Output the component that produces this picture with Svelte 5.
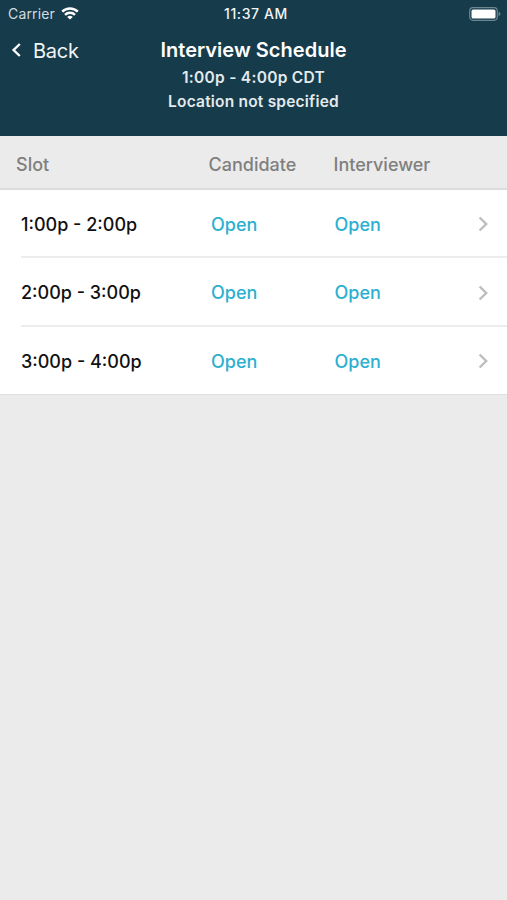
<script>
  const slots = ['1:00p - 2:00p', '2:00p - 3:00p', '3:00p - 4:00p'];
</script>

<div class="screen">
  <header>
    <div class="status">
      <div class="carrier">
        <span>Carrier</span>
        <svg width="18" height="13" viewBox="0 0 18 13" fill="none" stroke="#fff" stroke-width="2.5">
          <path d="M1.2 4.6C5.4 .4 12.6 .4 16.8 4.6" />
          <path d="M4 7.8C6.8 5 11.2 5 14 7.8" />
          <path d="M9 12.6L6.2 9.9Q9 7.7 11.8 9.9Z" fill="#fff" stroke="none" />
        </svg>
      </div>
      <div class="clock">11:37 AM</div>
      <div class="power">
        <svg width="33" height="14" viewBox="0 0 33 14">
          <rect x="1.7" y=".7" width="27.6" height="12.6" rx="3.2" fill="none" stroke="#6d8792" stroke-width="1.2" />
          <rect x="3.5" y="2.5" width="24" height="9" rx="1.6" fill="#fff" />
          <path d="M30.6 4.8Q32.4 5.4 32.4 7T30.6 9.2Z" fill="#6d8792" />
        </svg>
      </div>
    </div>
    <div class="nav">
      <div class="back">
        <svg width="10" height="15" viewBox="0 0 10 15" fill="none" stroke="#fff" stroke-width="2.4">
          <path d="M8.8 1L2.6 7L8.8 13" />
        </svg>
        <span>Back</span>
      </div>
      <div class="titles">
        <h1>Interview Schedule</h1>
        <p class="time">1:00p - 4:00p CDT</p>
        <p class="place">Location not specified</p>
      </div>
      <div></div>
    </div>
  </header>
  <div class="heads">
    <span class="h-slot">Slot</span>
    <span class="h-cand">Candidate</span>
    <span class="h-int">Interviewer</span>
  </div>
  <main>
    {#each slots as slot}
      <div class="row">
        <span class="slot">{slot}</span>
        <span class="open cand">Open</span>
        <span class="open">Open</span>
        <svg width="11" height="16" viewBox="0 0 11 16" fill="none" stroke="#bdbdbf" stroke-width="2.4">
          <path d="M1.6 1.5L8.2 8L1.6 14.5" />
        </svg>
      </div>
    {/each}
  </main>
</div>

<style>
  .screen {
    width: 507px;
    height: 900px;
    overflow: hidden;
    background: #ebebeb;
    font-family: Inter, "Liberation Sans", sans-serif;
    white-space: nowrap;
  }
  header {
    height: 136px;
    background: #163b4a;
    color: #fff;
  }
  .status {
    display: grid;
    grid-template-columns: 1fr auto 1fr;
    align-items: center;
    height: 27px;
    padding: 0 6px 0 8px;
  }
  .carrier {
    display: flex;
    align-items: center;
    gap: 6px;
    font-size: 14px;
    letter-spacing: .15px;
    color: #d3dce0;
  }
  .clock {
    padding-left: 3px;
    font-size: 14px;
    font-weight: 500;
    letter-spacing: .6px;
    color: #f0f4f6;
  }
  .power {
    display: flex;
    justify-content: flex-end;
  }
  .nav {
    display: grid;
    grid-template-columns: 1fr auto 1fr;
    padding: 0 11px;
  }
  .back {
    display: flex;
    align-items: center;
    gap: 12px;
    height: 47px;
    font-size: 20px;
    letter-spacing: -.25px;
    color: #f1f5f6;
  }
  .titles {
    text-align: center;
    padding-top: 10px;
  }
  h1, p {
    margin: 0;
  }
  h1 {
    margin-bottom: 2px;
    font-size: 20px;
    line-height: 27px;
    font-weight: 600;
    letter-spacing: .03px;
  }
  p {
    font-size: 15.5px;
    line-height: 24px;
    font-weight: 600;
    color: #e3eaed;
  }
  .time {
    letter-spacing: .28px;
  }
  .place {
    letter-spacing: .2px;
  }
  .heads {
    display: flex;
    align-items: center;
    box-sizing: border-box;
    height: 54px;
    padding: 5px 0 0 16px;
    border-bottom: 2px solid #dcdcdc;
    font-size: 18px;
    font-weight: 500;
    color: #7f7f7f;
  }
  .h-slot {
    width: 192.5px;
  }
  .h-cand {
    width: 125px;
  }
  main {
    height: 204px;
    padding-left: 21px;
    background: #fff;
    border-bottom: 1px solid #e0e0e0;
  }
  .row {
    display: flex;
    align-items: center;
    box-sizing: border-box;
    height: 68.4px;
    padding: 2.6px 18px 0 0;
    border-bottom: 2px solid #ededed;
  }
  .row:last-child {
    border-bottom-color: transparent;
  }
  .slot {
    width: 190px;
    font-size: 18px;
    font-weight: 500;
    color: #111;
  }
  .open {
    font-size: 18px;
    font-weight: 500;
    color: #2cb0d0;
  }
  .cand {
    width: 123.5px;
  }
  .row svg {
    margin-left: auto;
  }
</style>
